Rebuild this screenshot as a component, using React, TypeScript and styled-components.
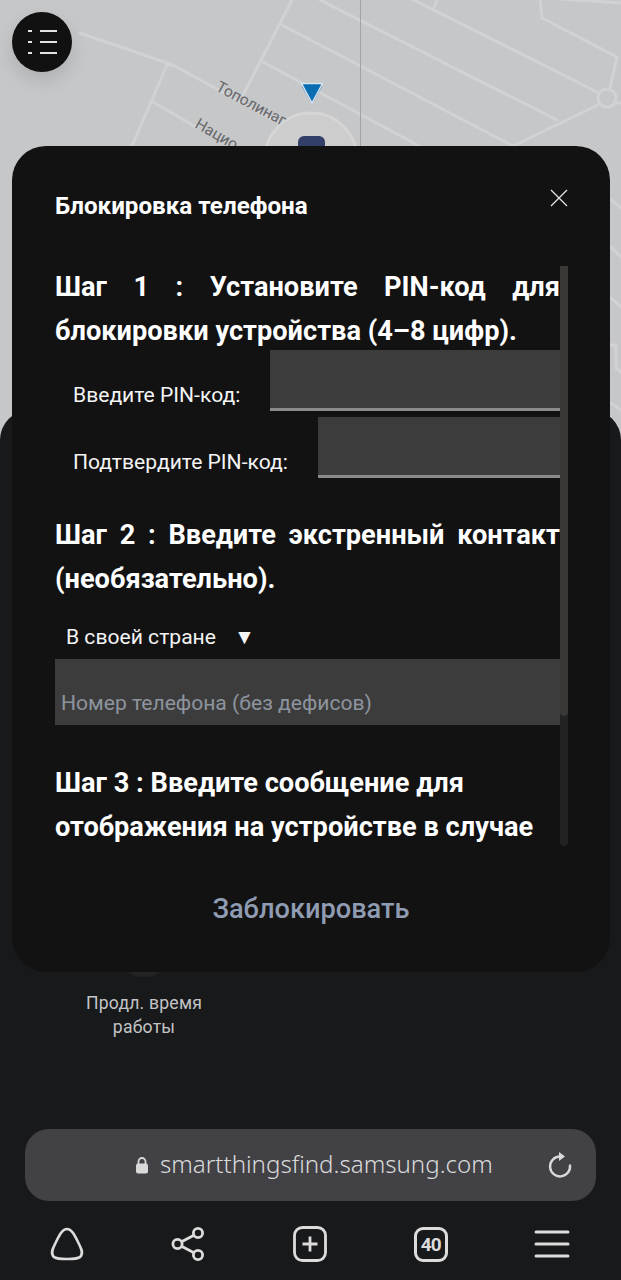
import React from 'react';
import styled, { createGlobalStyle } from 'styled-components';

const Global = createGlobalStyle`
  html, body { margin: 0; padding: 0; background: #18191b; }
  * { box-sizing: border-box; }
  body { font-family: Roboto, "Noto Sans", sans-serif; }
`;

const Screen = styled.div`
  position: relative; width: 621px; height: 1280px; overflow: hidden; background: #c6c7c9;
`;
const MapCanvas = styled.svg`
  position: absolute; left: 0; top: 0; width: 621px; height: 460px;
`;
const MenuFab = styled.div`
  position: absolute; left: 12px; top: 12px; width: 60px; height: 60px; border-radius: 50%;
  background: #111112; box-shadow: 0 8px 18px rgba(0,0,0,.12);
  display: flex; align-items: center; justify-content: center;
`;
const BottomSheet = styled.div`
  position: absolute; left: 0; right: 0; top: 410px; bottom: 0;
  background: #18191b; border-radius: 30px 30px 0 0;
  display: flex; flex-direction: column;
`;
const SheetBody = styled.div`
  flex: 1; display: flex; align-items: flex-end; padding: 0 0 90px 64px;
`;
const ActionColumn = styled.div`
  width: 160px; display: flex; flex-direction: column; align-items: center; gap: 14px;
`;
const ActionCircle = styled.div`
  width: 66px; height: 66px; border-radius: 50%; background: #232426;
`;
const ActionLabel = styled.div`
  width: 160px; text-align: center; font-size: 17.6px; line-height: 24px; color: #c3c4c6; letter-spacing: .2px;
`;
const UrlBar = styled.div`
  margin: 0 25px; height: 72px; border-radius: 24px; background: #414146;
  display: flex; align-items: center; padding: 0 23px 0 110px; color: #dadada;
`;
const UrlText = styled.span`
  font-family: "Noto Sans", sans-serif; font-size: 24.1px; margin-left: 11px; padding-bottom: 4px; flex: 1; white-space: nowrap; font-weight: 300;
`;
const NavBar = styled.nav`
  height: 79px; display: flex; align-items: center; justify-content: space-between; padding: 7px 34px 0 32px; color: #dcdcdc;
`;
const NavSlot = styled.div`
  width: 70px; height: 40px; display: flex; align-items: center; justify-content: center;
`;
const TabCount = styled.span`
  font-size: 19px; font-weight: 700; color: #dcdcdc; letter-spacing: -1px;
`;
const TabBox = styled.div`
  width: 34px; height: 35px; border: 3px solid #dcdcdc; border-radius: 9px;
  display: flex; align-items: center; justify-content: center;
`;
const Modal = styled.section`
  position: absolute; left: 12px; top: 146px; width: 598px; height: 826px;
  background: #121213; border-radius: 34px; display: flex; flex-direction: column; padding: 0 0 0 43px;
`;
const ModalHeader = styled.header`
  height: 120px; display: flex; align-items: flex-start; justify-content: space-between; padding: 45px 42px 0 0;
`;
const ModalTitle = styled.h2`
  margin: 0; font-size: 24.2px; line-height: 30px; font-weight: 700; color: #fff;
`;
const CloseBtn = styled.button`
  width: 18px; height: 18px; margin-top: -2px; padding: 0; border: 0; background: none; display: flex;
`;
const ScrollBox = styled.div`
  position: relative; width: 514px; height: 580px; overflow: hidden;
`;
const ScrollContent = styled.div`
  width: 505px; margin-top: -1px;
`;
const Track = styled.div`
  position: absolute; right: 1px; top: 0; bottom: 0; width: 8px; background: #222223; border-radius: 0 0 4px 4px;
`;
const Thumb = styled.div`
  position: absolute; left: 0; right: 0; top: 0; height: 450px; background: #3a3836; border-radius: 0 0 4px 4px;
`;
const Step = styled.p<{ $justify?: boolean }>`
  margin: 0; font-size: 27.2px; line-height: 44px; font-weight: 700; color: #fff;
  text-align: ${p => (p.$justify ? 'justify' : 'left')};
`;
const PinRow = styled.div<{ $gap: number }>`
  display: flex; align-items: flex-end; margin-top: ${p => p.$gap}px; padding-left: 18px; color: #f4f4f4; font-size: 21.1px;
`;
const PinLabel = styled.label<{ $w: number }>`
  width: ${p => p.$w}px; flex: none; padding-bottom: 1px; line-height: 30px; white-space: nowrap;
`;
const PinInput = styled.div`
  flex: 1; height: 61px; background: #3c3c3c; border-bottom: 3px solid #8b8b8b;
`;
const Spacer = styled.div<{ $h: number }>`
  height: ${p => p.$h}px;
`;
const CountrySelect = styled.div`
  height: 58px; display: flex; align-items: center; padding: 12px 0 0 11px; color: #f4f4f4; font-size: 21.1px; gap: 18px;
`;
const PhoneField = styled.div`
  height: 66px; background: #3c3c3c; padding: 29px 6px 0; font-size: 21.1px; line-height: 30px; color: #8e949e; white-space: nowrap;
`;
const LockBtn = styled.button`
  flex: 1; margin-left: -43px; border: 0; background: none; padding: 0; font-family: Roboto, sans-serif;
  font-size: 27.2px; font-weight: 500; color: #8f9cb2;
`;
const StreetLabel = styled.text`
  font-family: Roboto, sans-serif; font-size: 15.5px; fill: #66676a;
`;

export default function App() {
  return (
    <Screen>
      <Global />
      <MapCanvas viewBox="0 0 621 460" fill="none">
        <g stroke="#d1d2d4" strokeWidth="3" strokeLinecap="round" strokeLinejoin="round">
          <path d="M80 33L173 65L290 129" />
          <path d="M173 65H167L132 146" />
          <path d="M153 102L196 127" />
          <path d="M293 -2L243 95" />
          <path d="M320 0L557 120" />
          <path d="M282 25L513 146" />
          <path d="M263 62L423 148" />
          <path d="M410 -2L597 92" />
          <path d="M438 -2L433 10" />
          <path d="M540 -2L542 18L617 57" />
          <path d="M547 -2L621 3" />
          <path d="M617 57L610 88" />
          <path d="M598 105L513 146" />
          <path d="M616 103H621" />
          <circle cx="607" cy="98" r="9" />
          <path d="M611 200L621 208M611 247L621 257M611 298L621 307M611 403L621 410" />
          <path d="M611 345H616V368L621 372" />
        </g>
        <path d="M360.5 0V146" stroke="#a2a3a5" strokeWidth="1" />
        <circle cx="311" cy="159" r="46" fill="#cecdcd" stroke="#d5d5d5" strokeWidth="3" />
        <rect x="298" y="136" width="27" height="40" rx="6" fill="#343f69" />
        <path d="M304 86H320L312 100Z" fill="#0b6db1" stroke="#0b6db1" strokeWidth="4" strokeLinejoin="round" />
        <path d="M301.5 83.5H322.5L312 103Z" stroke="#d8e4ee" strokeWidth="1.5" strokeLinejoin="round" />
        <StreetLabel transform="translate(215 90) rotate(28)">Тополинаг</StreetLabel>
        <StreetLabel transform="translate(194 127) rotate(30)">Нацио</StreetLabel>
      </MapCanvas>
      <MenuFab>
        <svg width="30" height="24" viewBox="0 0 30 24" fill="none" stroke="#e4e4e4" strokeWidth="2">
          <path d="M1 1H5M13 1H30M1 12H5M13 12H30M1 23H5M13 23H30" />
        </svg>
      </MenuFab>
      <BottomSheet>
        <SheetBody>
          <ActionColumn>
            <ActionCircle />
            <ActionLabel>Продл. время<br />работы</ActionLabel>
          </ActionColumn>
        </SheetBody>
        <UrlBar>
          <svg width="14" height="17" viewBox="0 0 14 17" fill="#d9d9d9">
            <path d="M3.5 7V4.5a3.5 3.5 0 0 1 7 0V7" fill="none" stroke="#d9d9d9" strokeWidth="1.8" />
            <rect x="1" y="6.5" width="12" height="10" rx="2" />
          </svg>
          <UrlText>smartthingsfind.samsung.com</UrlText>
          <svg width="26" height="28" viewBox="0 0 26 28" fill="none" stroke="#dadada" strokeWidth="2.4" strokeLinecap="round">
            <path d="M12 5.5a10 10 0 1 0 11 9" />
            <path d="M12 1v9l6-4.5Z" fill="#dadada" stroke="none" />
          </svg>
        </UrlBar>
        <NavBar>
          <NavSlot>
            <svg width="34" height="34" viewBox="0 0 34 34" fill="none" stroke="#dcdcdc" strokeWidth="2.6">
              <path d="M17 2C12 2 9 9 5 17C2 23 1 26 3 29C5 32 11 32 17 32C23 32 29 32 31 29C33 26 32 23 29 17C25 9 22 2 17 2Z" />
            </svg>
          </NavSlot>
          <NavSlot>
            <svg width="34" height="36" viewBox="0 0 34 36" fill="none" stroke="#dcdcdc" strokeWidth="2.8">
              <circle cx="27" cy="7" r="4.6" /><circle cx="6.5" cy="18" r="4.6" /><circle cx="27" cy="29" r="4.6" />
              <path d="M10.5 15.8L23 9.2M10.5 20.2L23 26.8" />
            </svg>
          </NavSlot>
          <NavSlot>
            <svg width="34" height="36" viewBox="0 0 34 36" fill="none" stroke="#dcdcdc" strokeWidth="2.8">
              <rect x="1.5" y="1.5" width="31" height="33" rx="8" />
              <path d="M17 10.5V25.5M9.5 18H24.5" />
            </svg>
          </NavSlot>
          <NavSlot><TabBox><TabCount>40</TabCount></TabBox></NavSlot>
          <NavSlot>
            <svg width="36" height="28" viewBox="0 0 36 28" fill="none" stroke="#dcdcdc" strokeWidth="3" strokeLinecap="round">
              <path d="M2 2H34M2 14H34M2 26H34" />
            </svg>
          </NavSlot>
        </NavBar>
      </BottomSheet>
      <Modal>
        <ModalHeader>
          <ModalTitle>Блокировка телефона</ModalTitle>
          <CloseBtn aria-label="Закрыть">
            <svg width="18" height="18" viewBox="0 0 18 18" stroke="#e8e8e8" strokeWidth="1.2"><path d="M1 1L17 17M17 1L1 17" /></svg>
          </CloseBtn>
        </ModalHeader>
        <ScrollBox>
          <ScrollContent>
            <Step $justify>Шаг 1 : Установите PIN-код для блокировки устройства (4–8 цифр).</Step>
            <PinRow $gap={-3}><PinLabel $w={197}>Введите PIN-код:</PinLabel><PinInput /></PinRow>
            <PinRow $gap={6}><PinLabel $w={245}>Подтвердите PIN-код:</PinLabel><PinInput /></PinRow>
            <Spacer $h={35} />
            <Step $justify>Шаг 2 : Введите экстренный контакт (необязательно).</Step>
            <CountrySelect><span>В своей стране</span><span>▼</span></CountrySelect>
            <PhoneField>Номер телефона (без дефисов)</PhoneField>
            <Spacer $h={36} />
            <Step>Шаг 3 : Введите сообщение для отображения на устройстве в случае</Step>
          </ScrollContent>
          <Track><Thumb /></Track>
        </ScrollBox>
        <LockBtn>Заблокировать</LockBtn>
      </Modal>
    </Screen>
  );
}
